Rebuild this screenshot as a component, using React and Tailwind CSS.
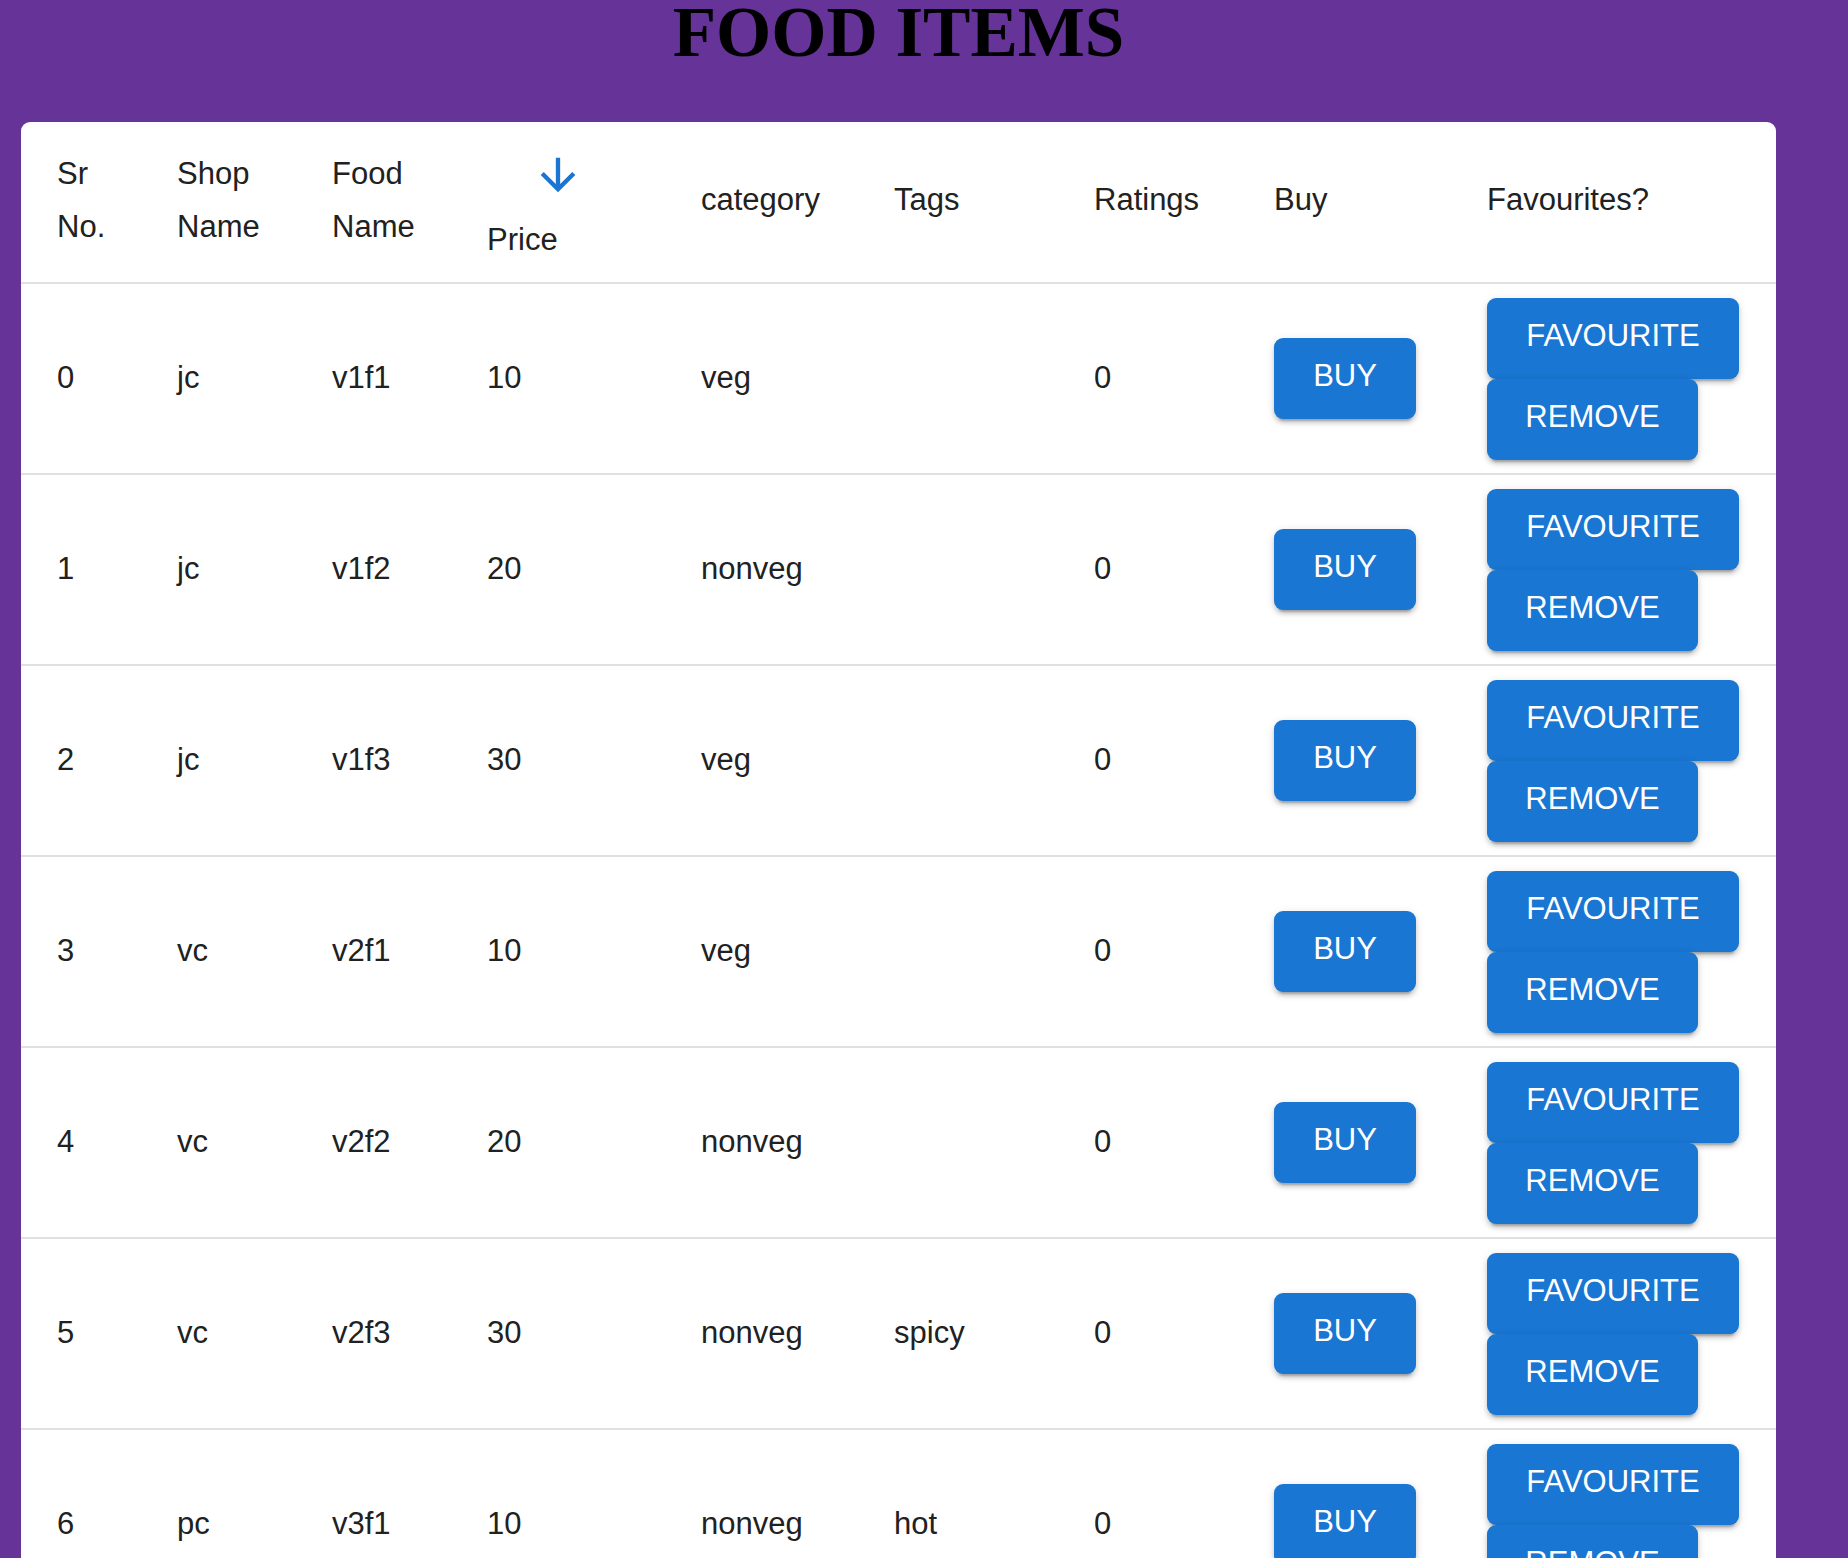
import React from 'react'

const ROWS = [
  { id: 0, shop: 'jc', food: 'v1f1', price: 10, category: 'veg', tags: '', rating: 0 },
  { id: 1, shop: 'jc', food: 'v1f2', price: 20, category: 'nonveg', tags: '', rating: 0 },
  { id: 2, shop: 'jc', food: 'v1f3', price: 30, category: 'veg', tags: '', rating: 0 },
  { id: 3, shop: 'vc', food: 'v2f1', price: 10, category: 'veg', tags: '', rating: 0 },
  { id: 4, shop: 'vc', food: 'v2f2', price: 20, category: 'nonveg', tags: '', rating: 0 },
  { id: 5, shop: 'vc', food: 'v2f3', price: 30, category: 'nonveg', tags: 'spicy', rating: 0 },
  { id: 6, shop: 'pc', food: 'v3f1', price: 10, category: 'nonveg', tags: 'hot', rating: 0 },
]

// shared column template so header and rows line up
const GRID = 'grid grid-cols-[121px_155px_155px_214px_193px_200px_180px_213px_1fr]'

const btn =
  'h-[81px] pb-[4px] rounded-[9px] bg-[#1976d2] text-white text-[31px] uppercase flex items-center justify-center ' +
  'shadow-[0_6px_2px_-4px_rgba(0,0,0,0.2),0_4px_4px_0_rgba(0,0,0,0.14),0_2px_10px_0_rgba(0,0,0,0.12)]'

function ArrowDown() {
  return (
    <svg viewBox="0 0 24 24" className="w-[52px] h-[52px] block ml-[45px]" fill="#1976d2">
      <path d="M20 12l-1.41-1.41L13 16.17V4h-2v12.17l-5.58-5.59L4 12l8 8 8-8z" />
    </svg>
  )
}

function Cell({ children, first, body }) {
  return (
    <div className={`${first ? 'pl-[36px]' : 'pl-[35px]'} ${body ? 'pb-[3px]' : ''} pr-2 leading-[53px]`}>
      {children}
    </div>
  )
}

export default function App() {
  return (
    <div className="min-h-screen bg-[#663399] pl-[21px] pb-10" style={{ fontFamily: '"Liberation Sans", Arial, sans-serif' }}>
      <div className="w-[1755px]">
        <h1
          className="text-center text-black font-bold text-[71px] leading-[65px] h-[65px]"
          style={{ fontFamily: '"Liberation Serif", "Times New Roman", serif' }}
        >
          FOOD ITEMS
        </h1>

        <div className="mt-[57px] bg-white rounded-[9px] overflow-hidden text-[31px] text-[#212121]">
          {/* Header */}
          <div className={`${GRID} h-[162px] items-center pb-[5px] border-b-2 border-[#e0e0e0]`}>
            <Cell first>Sr<br />No.</Cell>
            <Cell>Shop<br />Name</Cell>
            <Cell>Food<br />Name</Cell>
            <div className="self-start pl-[35px] pt-[27px]">
              <ArrowDown />
              <div className="mt-[12px] leading-[53px]">Price</div>
            </div>
            <Cell>category</Cell>
            <Cell>Tags</Cell>
            <Cell>Ratings</Cell>
            <Cell>Buy</Cell>
            <Cell>Favourites?</Cell>
          </div>

          {/* Rows */}
          {ROWS.map(r => (
            <div key={r.id} className={`${GRID} h-[191px] items-center border-b-2 border-[#e0e0e0]`}>
              <Cell first body>{r.id}</Cell>
              <Cell body>{r.shop}</Cell>
              <Cell body>{r.food}</Cell>
              <Cell body>{r.price}</Cell>
              <Cell body>{r.category}</Cell>
              <Cell body>{r.tags}</Cell>
              <Cell body>{r.rating}</Cell>
              <div className="pl-[35px]">
                <button className={`${btn} w-[142px]`}>Buy</button>
              </div>
              <div className="pl-[35px] flex flex-col items-start">
                <button className={`${btn} w-[252px]`}>Favourite</button>
                <button className={`${btn} w-[211px]`}>Remove</button>
              </div>
            </div>
          ))}
        </div>
      </div>
    </div>
  )
}
